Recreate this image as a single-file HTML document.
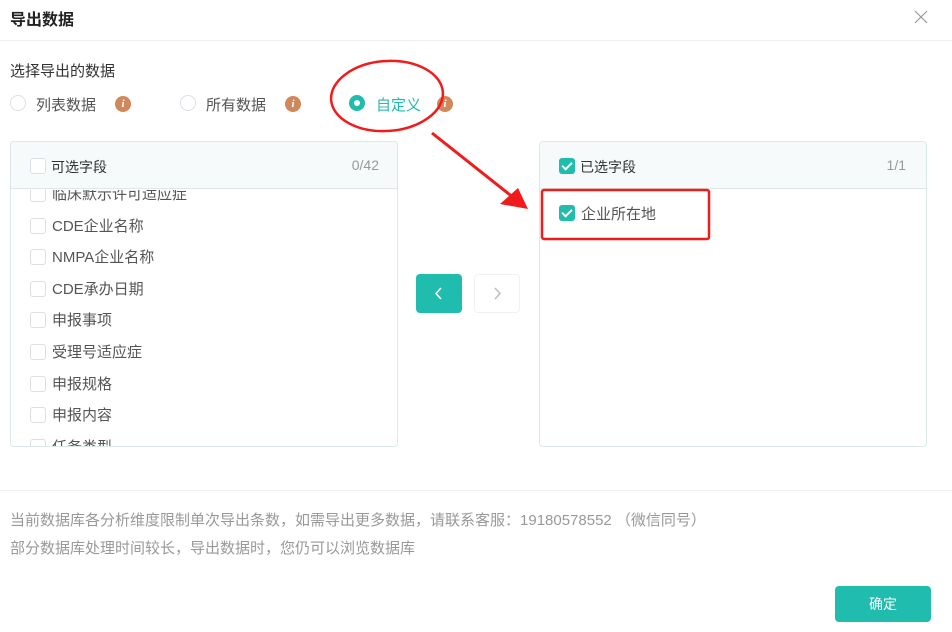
<!DOCTYPE html>
<html><head><meta charset="utf-8"><style>
*{margin:0;padding:0;box-sizing:border-box}
body{width:952px;height:632px;background:#fff;position:relative;overflow:hidden;font-family:"Liberation Sans","Noto Sans CJK SC",sans-serif;color:#333}
.a{position:absolute;white-space:nowrap}
.cb{position:absolute;width:16px;height:16px;border:1px solid #dcdfe6;border-radius:3px;background:#fff}
.cbk{position:absolute;width:16px;height:16px;border-radius:3px;background:#20bcad}
.cbk:after{content:"";position:absolute;left:5px;top:2px;width:4px;height:8px;border:solid #fff;border-width:0 2px 2px 0;transform:rotate(45deg)}
.radio{position:absolute;width:16px;height:16px;border:1px solid #dcdfe6;border-radius:50%}
.info{position:absolute;width:16px;height:16px;border-radius:50%;background:#d0885a;color:#fff;font:bold italic 11px/16px "Liberation Serif",serif;text-align:center}
.item{position:absolute;left:52px;font-size:15px;color:#555}
.panel{position:absolute;border:1px solid #dde9e8;border-radius:4px;overflow:hidden;background:#fff}
.ph{position:absolute;left:0;right:0;top:0;height:47px;background:#f6fafa;border-bottom:1px solid #dde9e8}
</style></head><body>
<div class="a" style="left:10px;top:6px;font-size:16px;font-weight:bold;color:#222">导出数据</div>
<svg class="a" style="left:914px;top:10px" width="14" height="14"><path d="M1 1 L13 13 M13 1 L1 13" stroke="#999" stroke-width="1.2"/></svg>
<div class="a" style="left:0;top:40px;width:952px;height:1px;background:#eee"></div>
<div class="a" style="left:10px;top:60px;font-size:15px;color:#333">选择导出的数据</div>

<div class="radio" style="left:10px;top:95px"></div>
<div class="a" style="left:36px;top:94px;font-size:15px;color:#555">列表数据</div>
<div class="info" style="left:115px;top:96px">i</div>
<div class="radio" style="left:180px;top:95px"></div>
<div class="a" style="left:206px;top:94px;font-size:15px;color:#555">所有数据</div>
<div class="info" style="left:285px;top:96px">i</div>
<div class="a" style="left:349px;top:95px;width:16px;height:16px;border-radius:50%;background:#20bcad"><div style="position:absolute;left:5px;top:5px;width:6px;height:6px;border-radius:50%;background:#fff"></div></div>
<div class="a" style="left:376px;top:94px;font-size:15px;color:#20bcad">自定义</div>
<div class="info" style="left:437px;top:96px">i</div>

<div class="panel" style="left:10px;top:141px;width:388px;height:306px">
 <div class="ph"></div>
 <div class="cb" style="left:19px;top:16px"></div>
 <div class="a" style="left:40px;top:15px;font-size:14px;color:#333">可选字段</div>
 <div class="a" style="right:18px;top:15px;font-size:14px;color:#999">0/42</div>
 <div style="position:absolute;left:0;top:48px;right:0;bottom:0;overflow:hidden">
  <div class="cb" style="left:19px;top:-4px"></div><div class="item" style="left:41px;top:-7px">临床默示许可适应症</div>
  <div class="cb" style="left:19px;top:28px"></div><div class="item" style="left:41px;top:25px">CDE企业名称</div>
  <div class="cb" style="left:19px;top:59px"></div><div class="item" style="left:41px;top:56px">NMPA企业名称</div>
  <div class="cb" style="left:19px;top:91px"></div><div class="item" style="left:41px;top:88px">CDE承办日期</div>
  <div class="cb" style="left:19px;top:122px"></div><div class="item" style="left:41px;top:119px">申报事项</div>
  <div class="cb" style="left:19px;top:154px"></div><div class="item" style="left:41px;top:151px">受理号适应症</div>
  <div class="cb" style="left:19px;top:186px"></div><div class="item" style="left:41px;top:183px">申报规格</div>
  <div class="cb" style="left:19px;top:217px"></div><div class="item" style="left:41px;top:214px">申报内容</div>
  <div class="cb" style="left:19px;top:249px"></div><div class="item" style="left:41px;top:246px">任务类型</div>
 </div>
</div>

<div class="a" style="left:416px;top:274px;width:46px;height:39px;background:#20bcad;border-radius:4px"><svg width="46" height="39"><path d="M25 14 L20 19.5 L25 25" stroke="#fff" stroke-width="1.6" fill="none"/></svg></div>
<div class="a" style="left:474px;top:274px;width:46px;height:39px;border:1px solid #eef2f2;border-radius:4px"><svg width="44" height="37"><path d="M20 13 L25 18.5 L20 24" stroke="#bbb" stroke-width="1.4" fill="none"/></svg></div>

<div class="panel" style="left:539px;top:141px;width:388px;height:306px">
 <div class="ph"></div>
 <div class="cbk" style="left:19px;top:16px"></div>
 <div class="a" style="left:40px;top:15px;font-size:14px;color:#333">已选字段</div>
 <div class="a" style="right:20px;top:15px;font-size:14px;color:#999">1/1</div>
 <div class="cbk" style="left:19px;top:63px"></div>
 <div class="a" style="left:41px;top:61px;font-size:15px;color:#555">企业所在地</div>
</div>

<div class="a" style="left:0;top:490px;width:952px;height:1px;background:#eee"></div>
<div class="a" style="left:10px;top:509px;font-size:15px;color:#999">当前数据库各分析维度限制单次导出条数，如需导出更多数据，请联系客服：19180578552 （微信同号）</div>
<div class="a" style="left:10px;top:537px;font-size:15px;color:#999">部分数据库处理时间较长，导出数据时，您仍可以浏览数据库</div>
<div class="a" style="left:835px;top:586px;width:96px;height:36px;background:#20bcad;border-radius:4px;color:#fff;font-size:14px;text-align:center;line-height:36px">确定</div>

<svg class="a" style="left:0;top:0" width="952" height="632">
 <ellipse cx="387" cy="96" rx="56" ry="35" fill="none" stroke="#f01c1c" stroke-width="2.5" transform="rotate(-4 387 96)"/>
 <path d="M432 133 L514 198" stroke="#f01c1c" stroke-width="3" fill="none"/>
 <path d="M528 209 L500 204 L518 188 Z" fill="#f01c1c"/>
 <rect x="542" y="190" width="167" height="49" rx="2" fill="none" stroke="#f01c1c" stroke-width="2.5"/>
</svg>
</body></html>
